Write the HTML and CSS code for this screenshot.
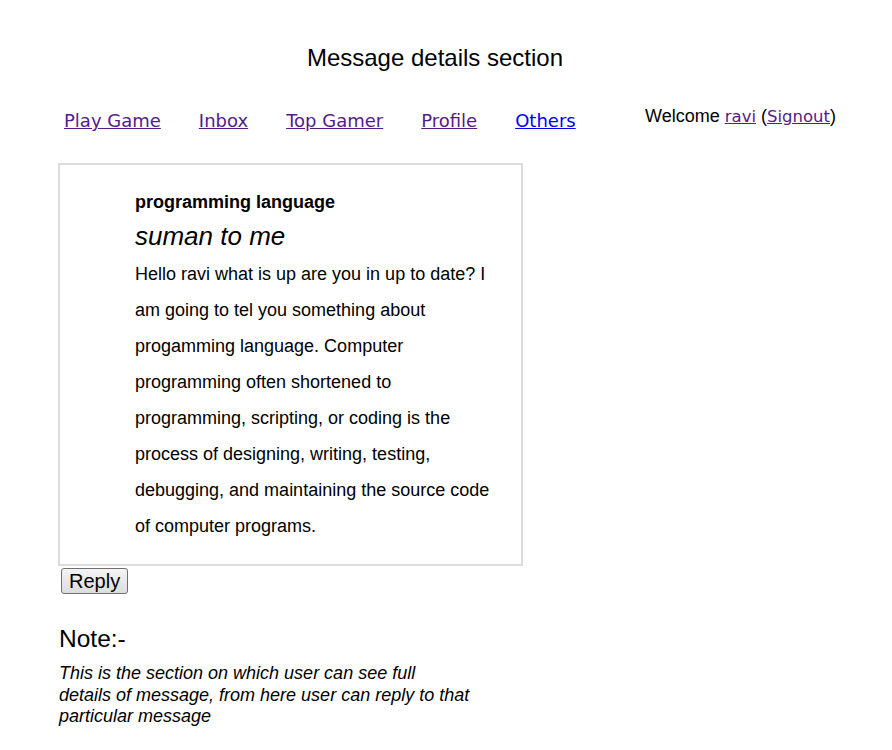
FILE: index.html
```html
<!DOCTYPE html>
<html>
<head>
<meta charset="utf-8">
<link rel="stylesheet" href="styles.css">
</head>
<body>
<h1 class="title">Message details section</h1>
<div class="topbar">
  <ul class="nav">
    <li><a class="visited" href="#">Play Game</a></li>
    <li><a class="visited" href="#">Inbox</a></li>
    <li><a class="visited" href="#">Top Gamer</a></li>
    <li><a class="visited" href="#">Profile</a></li>
    <li><a class="fresh" href="#">Others</a></li>
  </ul>
  <div class="welcome">Welcome <a class="visited" href="#">ravi</a> (<a class="visited" href="#">Signout</a>)</div>
</div>
<div class="main">
  <div class="message">
    <div class="subject">programming language</div>
    <div class="from">suman to me</div>
    <p class="body">Hello ravi what is up are you in up to date? I am going to tel you something about progamming language. Computer programming often shortened to programming, scripting, or coding is the process of designing, writing, testing, debugging, and maintaining the source code of computer programs.</p>
  </div>
  <button class="reply">Reply</button>
  <h2 class="note-title">Note:-</h2>
  <p class="note">This is the section on which user can see full details of message, from here user can reply to that particular message</p>
</div>
</body>
</html>
```
FILE: styles.css
```css
body {
  margin: 0;
  font-family: "Liberation Sans", Arial, sans-serif;
  color: #000;
  background: #fff;
}
.title {
  margin: 0;
  padding-top: 44px;
  font-size: 24px;
  font-weight: normal;
  text-align: center;
  width: 870px;
  line-height: 28px;
}
.topbar {
  display: flex;
  justify-content: space-between;
  margin-top: 34px;
  padding-left: 64px;
  padding-right: 56px;
}
.nav {
  display: flex;
  gap: 38px;
  list-style: none;
  margin: 0;
  padding: 0;
  padding-top: 4px;
  font-family: "DejaVu Sans", Verdana, sans-serif;
  font-size: 18px;
}
.welcome {
  font-size: 18px;
}
.welcome a {
  font-family: "DejaVu Sans", Verdana, sans-serif;
  font-size: 16.5px;
}
.visited { color: #551a8b; }
.fresh { color: #0000ee; }
.main {
  margin-left: 58px;
  margin-top: 32px;
}
.message {
  width: 386px;
  border: 2px solid #dcdcdc;
  padding: 23px 0 20px 75px;
}
.subject {
  font-weight: bold;
  font-size: 18px;
  line-height: 29px;
}
.from {
  font-style: italic;
  font-size: 26px;
  line-height: 39px;
}
.body {
  margin: 0;
  font-size: 18px;
  line-height: 36px;
  padding-right: 20px;
}
.reply {
  display: block;
  margin: 2px 0 0 3px;
  height: 26px;
  font-family: "Liberation Sans", Arial, sans-serif;
  font-size: 20px;
  line-height: 22px;
  padding: 0 7px;
  border: 1px solid #707070;
  border-radius: 3px;
  background: linear-gradient(#f4f4f4, #dddddd);
  color: #000;
}
.note-title {
  margin: 31px 0 0 1px;
  font-size: 24.5px;
  font-weight: normal;
  line-height: 28px;
}
.note {
  margin: 10px 0 0 1px;
  width: 412px;
  font-style: italic;
  font-size: 18px;
  line-height: 21.5px;
}
```
